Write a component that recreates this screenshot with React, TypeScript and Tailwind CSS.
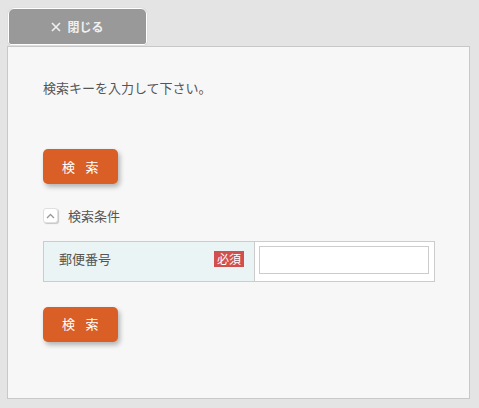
import { useState } from "react";

export default function App() {
  const [open, setOpen] = useState(true);
  const [zip, setZip] = useState("");

  const font = { fontFamily: '"Noto Sans CJK JP", "Noto Sans", sans-serif' };

  return (
    <div className="w-[479px] h-[408px] bg-[#e4e4e4] pl-[7px] pt-[8px]" style={font}>
      {/* close tab */}
      <button className="ml-[1px] flex h-[37px] w-[139px] items-center justify-center gap-[6px] rounded-t-[6px] rounded-b-[3px] border border-white bg-[#999999] text-[12px] font-bold text-[#f0f0f0] shadow-[0_0_1px_#bbb]">
        <svg width="10" height="10" viewBox="0 0 10 10" className="mt-[1px]">
          <path d="M1 1 L9 9 M9 1 L1 9" stroke="#f0f0f0" strokeWidth="1.6" />
        </svg>
        閉じる
      </button>

      {/* panel */}
      <div className="mt-[1px] h-[353px] w-[463px] border border-[#c8c8c8] bg-[#f7f7f7] px-[35px] pt-[32px]">
        <p className="text-[13px] leading-[18px] text-[#555]">検索キーを入力して下さい。</p>

        <button className="mt-[52px] h-[35px] w-[75px] rounded-[5px] bg-[#d95f27] pl-[10px] text-[13px] tracking-[0.8em] text-white shadow-[2px_3px_5px_rgba(0,0,0,0.28)]">
          検索
        </button>

        <div className="mt-[22px] flex items-center gap-[10px]">
          <button
            onClick={() => setOpen(!open)}
            className="flex h-[15px] w-[15px] items-center justify-center rounded-[3px] border border-[#e0e0e0] bg-white shadow-[1px_1px_1px_rgba(0,0,0,0.2)]"
          >
            <svg width="9" height="6" viewBox="0 0 9 6">
              <path d={open ? "M1 5 L4.5 1.5 L8 5" : "M1 1 L4.5 4.5 L8 1"} fill="none" stroke="#999" strokeWidth="1.3" />
            </svg>
          </button>
          <span className="text-[13px] text-[#555]">検索条件</span>
        </div>

        {open && (
          <div className="mt-[15px] flex h-[41px] w-[392px] border border-[#cccccc] bg-white">
            <div className="flex w-[211px] items-center justify-between border-r border-[#cccccc] bg-[#ebf4f4] pb-[5px] pl-[15px] pr-[10px]">
              <span className="text-[13px] text-[#555]">郵便番号</span>
              <span className="bg-[#d05050] px-[3px] text-[12px] leading-[16px] text-white">必須</span>
            </div>
            <div className="flex flex-1 items-center pb-[2px] pl-[4px] pr-[5px]">
              <input
                value={zip}
                onChange={(e) => setZip(e.target.value)}
                className="h-[28px] w-full border border-[#cccccc] bg-white px-1 text-[13px] outline-none"
              />
            </div>
          </div>
        )}

        <button className="mt-[25px] h-[35px] w-[75px] rounded-[5px] bg-[#d95f27] pl-[10px] text-[13px] tracking-[0.8em] text-white shadow-[2px_3px_5px_rgba(0,0,0,0.28)]">
          検索
        </button>
      </div>
    </div>
  );
}
